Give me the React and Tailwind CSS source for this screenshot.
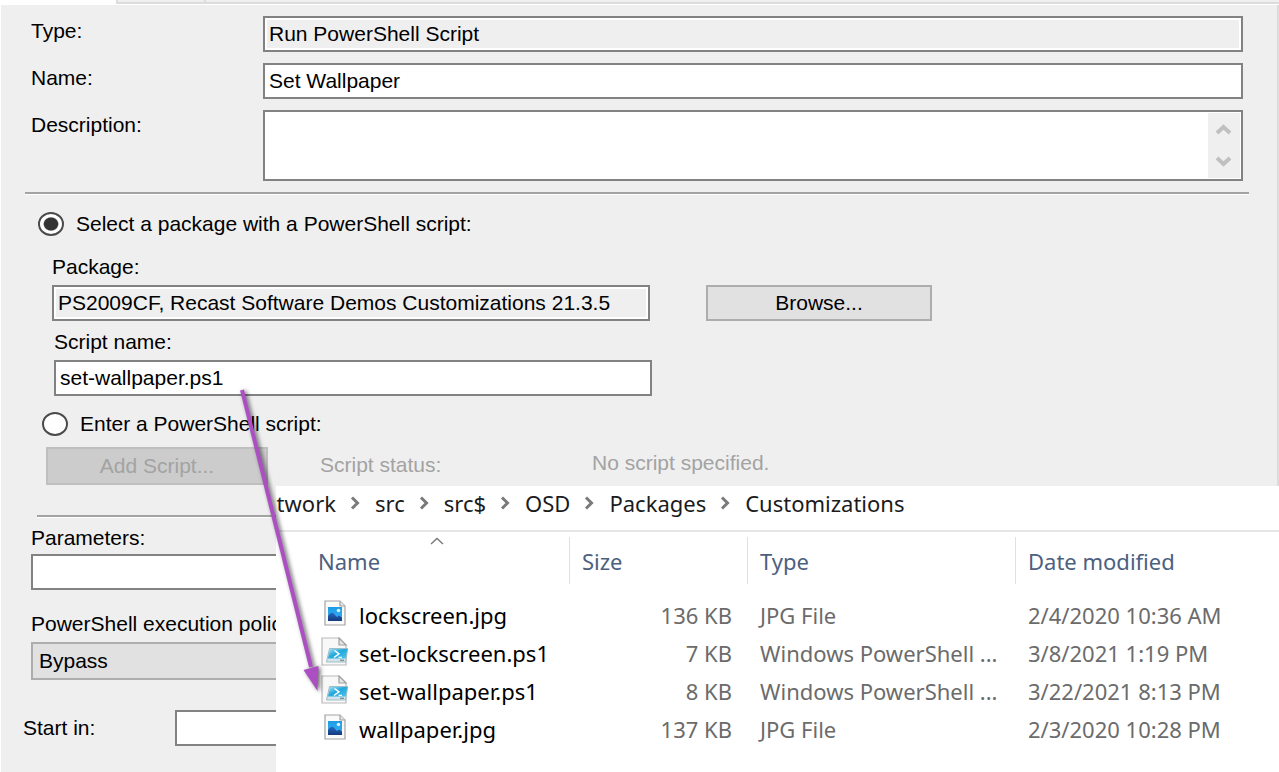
import { useState } from "react";

const FILES = [
  { name: "lockscreen.jpg", size: "136 KB", type: "JPG File", date: "2/4/2020 10:36 AM", kind: "image" },
  { name: "set-lockscreen.ps1", size: "7 KB", type: "Windows PowerShell ...", date: "3/8/2021 1:19 PM", kind: "script" },
  { name: "set-wallpaper.ps1", size: "8 KB", type: "Windows PowerShell ...", date: "3/22/2021 8:13 PM", kind: "script" },
  { name: "wallpaper.jpg", size: "137 KB", type: "JPG File", date: "2/3/2020 10:28 PM", kind: "image" },
];

const CRUMBS = ["src", "src$", "OSD", "Packages", "Customizations"];

const FIELD = "block h-9 border-2 border-[#828282] px-1 text-[21px] leading-6 text-black outline-none";

function ImageFileIcon() {
  return (
    <svg width="22" height="26" viewBox="0 0 22 26" aria-hidden="true">
      <defs>
        <linearGradient id="sky" x1="0" y1="0" x2="0" y2="1">
          <stop offset="0" stopColor="#1f9be6" />
          <stop offset="1" stopColor="#35b3f5" />
        </linearGradient>
        <linearGradient id="hill" x1="0" y1="0" x2="0" y2="1">
          <stop offset="0" stopColor="#2866bd" />
          <stop offset="1" stopColor="#123a80" />
        </linearGradient>
      </defs>
      <path d="M1 1h15l5 5v19H1z" fill="#fafafa" stroke="#a3a3a3" strokeWidth="1.2" />
      <path d="M16 1v5h5" fill="#e4e4e4" stroke="#a3a3a3" strokeWidth="1.2" />
      <rect x="4" y="7" width="14" height="14" fill="url(#sky)" />
      <path d="M4 16c3-4 5-4 7-1l2 2 2-1.500 3 2V21H4z" fill="url(#hill)" />
      <circle cx="14.500" cy="10.500" r="1.800" fill="#d9f1ff" />
    </svg>
  );
}

function ScriptFileIcon() {
  return (
    <svg width="27" height="29" viewBox="0 0 27 29" aria-hidden="true">
      <defs>
        <linearGradient id="shell" x1="0" y1="0" x2="1" y2="1">
          <stop offset="0" stopColor="#a6e2f6" />
          <stop offset="0.45" stopColor="#22a9dc" />
          <stop offset="1" stopColor="#4cc2ea" />
        </linearGradient>
      </defs>
      <path d="M1 1h17l7 7v20H1z" fill="#f8f8f8" stroke="#bababa" strokeWidth="1.200" />
      <path d="M18 1v7h7z" fill="#e6e6e6" stroke="#a0a0a0" strokeWidth="1.200" />
      <path d="M8.500 11.500h18.300L24.500 25H5.500z" fill="#d3e4ea" stroke="#8fb0bb" strokeWidth="0.800" />
      <path d="M9 12h17.500L24.500 21.500H7z" fill="url(#shell)" />
      <path d="M13.500 13.500l4.500 3.300-5 3.700" fill="none" stroke="#fff" strokeWidth="1.500" />
      <path d="M17.500 20.300h3.500" stroke="#fff" strokeWidth="1.200" />
      <path d="M19 23.300h4" stroke="#6c8791" strokeWidth="1.200" />
    </svg>
  );
}

function CrumbArrow() {
  return (
    <svg width="11" height="14" viewBox="0 0 11 14" className="shrink-0" aria-hidden="true">
      <path d="M2 1.500L7.500 7 2 12.500" fill="none" stroke="#7a7a7a" strokeWidth="3" />
    </svg>
  );
}

function ScrollArrow({ down }) {
  return (
    <svg width="16" height="12" viewBox="0 0 16 12" aria-hidden="true">
      <path d={down ? "M1 2l6.500 6 6.500-6" : "M1 10l6.500-6 6.500 6"} fill="none" stroke="#c0c0c0" strokeWidth="4" />
    </svg>
  );
}

function Radio({ id, label, checked, onChange }) {
  return (
    <div className="flex h-6 items-center gap-3">
      <input
        type="radio"
        id={id}
        name="source"
        checked={checked}
        onChange={onChange}
        className="h-6 w-[26px] appearance-none rounded-[50%] border-2 border-[#4a4a4a] bg-white checked:bg-[radial-gradient(ellipse_closest-side,#333_0_60%,#fff_72%)]"
      />
      <label htmlFor={id}>{label}</label>
    </div>
  );
}

function Divider({ className }) {
  return <div className={`h-[3px] border-t-2 border-b border-t-[#a3a3a3] border-b-white ${className}`} />;
}

function Explorer() {
  return (
    <section className="absolute top-[486px] right-0 bottom-0 left-[276px] bg-white font-['Noto_Sans',sans-serif] text-[22px] leading-7 text-[#6b6b6b]">
      <nav className="flex h-[46px] items-center gap-[14px] border-b-2 border-[#e6e6e6] pb-[10px] text-[#1b1b1b]">
        <div className="flex w-[60px] justify-end overflow-hidden">
          <a href="#network">Network</a>
        </div>
        {CRUMBS.map((crumb) => (
          <div key={crumb} className="flex items-center gap-[14px]">
            <CrumbArrow />
            <a href={`#${crumb}`}>{crumb}</a>
          </div>
        ))}
      </nav>
      <table className="w-full table-fixed border-collapse text-left">
        <colgroup>
          <col className="w-[293px]" />
          <col className="w-[178px]" />
          <col className="w-[268px]" />
          <col />
        </colgroup>
        <thead>
          <tr className="h-16 align-top text-[#4c607f]">
            <th className="relative pt-[15px] pl-[42px] font-normal">
              Name
              <svg width="14" height="8" viewBox="0 0 14 8" className="absolute top-[5px] left-[154px]" aria-hidden="true">
                <path d="M1 7l6-5.500 6 5.500" fill="none" stroke="#777" strokeWidth="1.300" />
              </svg>
            </th>
            {["Size", "Type", "Date modified"].map((title) => (
              <th key={title} className="pt-[5px] font-normal">
                <div className="h-[47px] border-l border-[#e0e0e0] pt-[10px] pl-3">{title}</div>
              </th>
            ))}
          </tr>
        </thead>
        <tbody>
          {FILES.map((file) => (
            <tr key={file.name} className="h-[38px] whitespace-nowrap">
              <td className="p-0 pl-[45px]">
                <div className="flex items-center gap-[11px] text-black">
                  <span className="flex w-[27px] justify-center pb-1">
                    {file.kind === "image" ? <ImageFileIcon /> : <ScriptFileIcon />}
                  </span>
                  {file.name}
                </div>
              </td>
              <td className="p-0 pr-[15px] text-right">{file.size}</td>
              <td className="p-0 pl-[13px]">{file.type}</td>
              <td className="p-0 pl-[13px]">{file.date}</td>
            </tr>
          ))}
        </tbody>
      </table>
    </section>
  );
}

export default function App() {
  const [source, setSource] = useState("package");
  return (
    <main className="relative flex min-h-screen flex-col overflow-hidden bg-white font-['Liberation_Sans',Arial,sans-serif] text-[21px] leading-6 text-black">
      <div className="flex h-[5px]">
        <div className="w-[116px]" />
        <div className="flex h-1 flex-1 border-b-2 border-l-2 border-[#dcdcdc] bg-[#efefef]">
          <div className="w-[88px] border-r-2 border-[#dcdcdc]" />
        </div>
      </div>
      <form className="ml-px flex flex-1 flex-col border-r-2 border-[#dcdcdc] bg-[#efefef] pt-[11px]" onSubmit={(e) => e.preventDefault()}>
        <div className="flex flex-col gap-[11px] pr-[34px] pl-[30px]">
          <div className="flex">
            <label htmlFor="type" className="w-[232px] pt-[3px]">Type:</label>
            <input id="type" readOnly value="Run PowerShell Script" className={`${FIELD} min-w-0 flex-1 bg-[#efefef] shadow-[inset_0_0_0_2px_white]`} />
          </div>
          <div className="flex">
            <label htmlFor="name" className="w-[232px] pt-[3px]">Name:</label>
            <input id="name" defaultValue="Set Wallpaper" className={`${FIELD} min-w-0 flex-1 bg-white`} />
          </div>
          <div className="flex">
            <label htmlFor="description" className="w-[232px] pt-[3px]">Description:</label>
            <div className="flex h-[71px] flex-1 border-2 border-[#828282] bg-white p-px">
              <textarea id="description" className="flex-1 resize-none px-1 outline-none" />
              <div className="flex w-8 flex-col items-center justify-between bg-[#efefef] py-[10px]">
                <ScrollArrow />
                <ScrollArrow down />
              </div>
            </div>
          </div>
        </div>
        <Divider className="mt-[11px] mr-7 ml-6" />
        <div className="mt-[17px] pl-[37px]">
          <Radio id="package-source" label="Select a package with a PowerShell script:" checked={source === "package"} onChange={() => setSource("package")} />
        </div>
        <div className="mt-[19px] flex flex-col pl-[51px]">
          <label htmlFor="package">Package:</label>
          <div className="mt-[6px] flex gap-14">
            <input id="package" readOnly value="PS2009CF, Recast Software Demos Customizations 21.3.5" className={`${FIELD} w-[598px] bg-[#efefef] shadow-[inset_0_0_0_2px_white]`} />
            <button type="button" className="h-9 w-[226px] border-2 border-[#adadad] bg-[#e1e1e1]">Browse...</button>
          </div>
        </div>
        <div className="mt-[9px] flex flex-col pl-[53px]">
          <label htmlFor="script-name">Script name:</label>
          <input id="script-name" defaultValue="set-wallpaper.ps1" className={`${FIELD} mt-[6px] w-[598px] bg-white`} />
        </div>
        <div className="mt-4 pl-[41px]">
          <Radio id="inline-source" label="Enter a PowerShell script:" checked={source === "inline"} onChange={() => setSource("inline")} />
        </div>
        <div className="mt-[11px] flex pl-[45px] text-[#a3a3a3]">
          <button type="button" disabled className="h-[38px] w-[222px] border-2 border-[#bfbfbf] bg-[#cccccc]">Add Script...</button>
          <span className="ml-[52px] w-[272px] pt-[6px]">Script status:</span>
          <span className="pt-1">No script specified.</span>
        </div>
        <Divider className="mt-[30px] mr-7 ml-9" />
        <div className="mt-2 flex flex-col pl-[30px]">
          <label htmlFor="parameters">Parameters:</label>
          <input id="parameters" className={`${FIELD} mt-1 w-[598px] bg-white`} />
        </div>
        <div className="mt-[22px] flex flex-col pl-[30px]">
          <label htmlFor="policy">PowerShell execution policy:</label>
          <select id="policy" className="mt-[6px] h-[38px] w-[598px] appearance-none border-2 border-[#adadad] bg-[#e1e1e1] px-[6px]">
            <option>Bypass</option>
            <option>AllSigned</option>
            <option>Undefined</option>
          </select>
        </div>
        <div className="mt-[30px] flex items-center pl-[22px]">
          <label htmlFor="start-in" className="w-[152px]">Start in:</label>
          <input id="start-in" className={`${FIELD} w-[460px] bg-white`} />
        </div>
      </form>
      <Explorer />
      <svg width="84" height="306" viewBox="0 0 84 306" className="pointer-events-none absolute top-[388px] left-[238px] drop-shadow-[2px_1px_2px_rgba(0,0,0,0.6)]" aria-hidden="true">
        <path d="M4 2L73 279" stroke="#ab4fc3" strokeWidth="4" fill="none" />
        <path d="M65.500 282l15-4-1 25z" fill="#ab4fc3" />
      </svg>
    </main>
  );
}
